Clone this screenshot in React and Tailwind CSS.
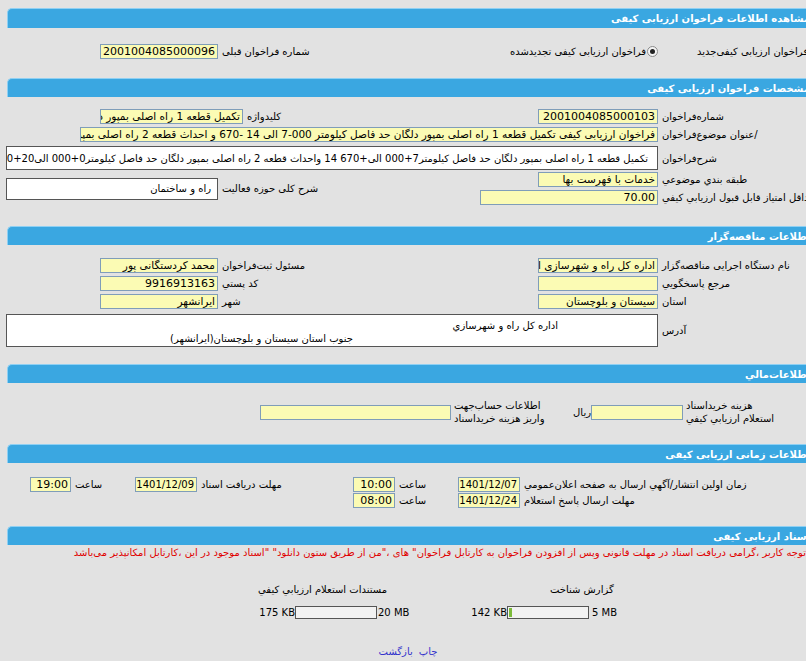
import React from 'react'

function Bar({ title, className = '' }) {
  return (
    <div
      dir="rtl"
      className={`ml-[7px] flex h-[19px] items-center rounded-tl-[5px] border-l border-t border-[#8fd0f3] bg-[#3aa7e1] pr-[12px] text-[10px] font-bold text-white ${className}`}
    >
      {title}
    </div>
  )
}

function Input({ className = '', num, date, children }) {
  const size = num ? 'text-[11px]' : date ? 'text-[10px]' : 'text-[10.5px]'
  return (
    <div
      dir="rtl"
      className={`h-[15px] shrink-0 overflow-hidden whitespace-nowrap border border-[#7f9db9] bg-[#fbfbb4] px-[2px] text-right leading-[13px] text-black ${size} ${className}`}
    >
      {children}
    </div>
  )
}

function Label({ children, className = '' }) {
  return (
    <span dir="rtl" className={`ml-[4px] whitespace-nowrap text-[10px] ${className}`}>
      {children}
    </span>
  )
}

function Radio({ checked }) {
  return (
    <span className="flex h-[11px] w-[11px] shrink-0 items-center justify-center rounded-full border border-[#8a8a8a] bg-[#f4f4f4]">
      {checked && <span className="h-[5px] w-[5px] rounded-full bg-[#222]" />}
    </span>
  )
}

function Progress({ pct }) {
  return (
    <div className="h-[13px] w-[82px] shrink-0 border border-[#555] bg-[#f2f2f2] p-[1px]">
      <div className="h-full bg-[#7cbb3a]" style={{ width: `${pct}%` }} />
    </div>
  )
}

export default function App() {
  return (
    <div className="h-[661px] w-[806px] overflow-hidden bg-[#e2e2e2] font-['DejaVu_Sans',sans-serif] text-[10px] text-black">
      <div className="w-[822px] pt-[8px]">
        <Bar title="مشاهده اطلاعات فراخوان ارزیابی کیفی" className="h-[20px] pr-[10px]" />

        {/* نوع فراخوان */}
        <div className="mt-[16px] flex h-[15px] items-center">
          <div className="flex w-[510px] items-center pl-[100px]">
            <Input num className="w-[118px]">2001004085000096</Input>
            <Label>شماره فراخوان قبلی</Label>
          </div>
          <div className="flex items-center">
            <span dir="rtl" className="w-[136px] whitespace-nowrap text-right">فراخوان ارزیابی کیفی تجدیدشده</span>
            <span className="ml-[1px]"><Radio checked /></span>
            <span dir="rtl" className="ml-[33px] w-[117px] whitespace-nowrap text-right">فراخوان ارزیابی کیفی‌جدید</span>
            <span className="ml-[2px]"><Radio /></span>
          </div>
        </div>

        <Bar title="مشخصات فراخوان ارزیابی کیفی" className="mt-[19px]" />

        <div className="mt-[12px] flex h-[15px] items-center">
          <div className="flex w-[538px] items-center pl-[100px]">
            <Input className="w-[143px]">تکمیل قطعه 1 راه اصلی بمپور دلگان</Input>
            <Label>کلیدواژه</Label>
          </div>
          <Input num className="w-[120px]">2001004085000103</Input>
          <Label>شماره‌فراخوان</Label>
        </div>

        <div className="mt-[3px] flex h-[15px] items-center pl-[80px]">
          <Input className="w-[578px]">
            فراخوان ارزیابی کیفی تکمیل قطعه 1 راه اصلی بمپور دلگان حد فاصل کیلومتر 000-7 الی 14 -670 و احداث قطعه 2 راه اصلی بمپور دلگان حد فاصل کیلومتر
          </Input>
          <Label>/عنوان موضوع‌فراخوان</Label>
        </div>

        <div className="mt-[4px] flex h-[24px] items-center pl-[6px]">
          <div
            dir="rtl"
            className="flex h-[24px] w-[652px] items-center overflow-hidden whitespace-nowrap border border-[#555] bg-white pr-[9px]"
          >
            تکمیل قطعه 1 راه اصلی بمپور دلگان حد فاصل کیلومتر7+000 الی+670 14 واحداث قطعه 2 راه اصلی بمپور دلگان حد فاصل کیلومتر0+000 الی20+000
          </div>
          <Label>شرح‌فراخوان</Label>
        </div>

        <div className="mt-[2px] flex items-center">
          <div className="flex w-[480px] items-center pl-[6px]">
            <div dir="rtl" className="flex h-[22px] w-[212px] items-center border border-[#555] bg-white pr-[6px]">
              راه و ساختمان
            </div>
            <Label>شرح کلی حوزه فعالیت</Label>
          </div>
          <div className="flex flex-col">
            <div className="flex h-[15px] items-center pl-[58px]">
              <Input className="w-[120px]">خدمات با فهرست بها</Input>
              <Label>طبقه بندي موضوعي</Label>
            </div>
            <div className="mt-[3px] flex h-[15px] items-center">
              <Input num className="w-[178px]">70.00</Input>
              <Label>حداقل امتیاز قابل قبول ارزیابي کیفي</Label>
            </div>
          </div>
        </div>

        <Bar title="اطلاعات مناقصه‌گزار" className="mt-[21px]" />

        {[
          ['محمد کردستگانی پور', 'مسئول ثبت‌فراخوان', 'اداره کل راه و شهرسازی ایرانشهر', 'نام دستگاه اجرایی مناقصه‌گزار'],
          ['9916913163', 'کد پستي', '', 'مرجع پاسخگويي'],
          ['ایرانشهر', 'شهر', 'سیستان و بلوچستان', 'استان'],
        ].map(([lv, ll, rv, rl], i) => (
          <div key={i} className={`${i === 0 ? 'mt-[13px]' : 'mt-[3px]'} flex h-[15px] items-center`}>
            <div className="flex w-[538px] items-center pl-[100px]">
              <Input num={i === 1} className="w-[118px]">{lv}</Input>
              <Label>{ll}</Label>
            </div>
            <Input className="w-[120px]">{rv}</Input>
            <Label>{rl}</Label>
          </div>
        ))}

        <div className="mt-[5px] flex items-center pl-[6px]">
          <div dir="rtl" className="h-[33px] w-[652px] border border-[#555] bg-white pt-[4px] leading-[13px]">
            <div className="pr-[99px]">اداره کل راه و شهرسازي</div>
            <div className="pr-[304px]">جنوب استان سیستان و بلوچستان(ایرانشهر)</div>
          </div>
          <Label>آدرس</Label>
        </div>

        <Bar title="اطلاعات‌مالي" className="mt-[17px]" />

        <div className="mt-[14px] flex h-[30px] items-center">
          <div className="flex w-[570px] items-center pl-[260px]">
            <Input className="w-[191px]" />
            <div dir="rtl" className="ml-[3px] whitespace-nowrap text-left leading-[13px]">
              <div>اطلاعات حساب‌جهت</div>
              <div>واریز هزینه خریداسناد</div>
            </div>
          </div>
          <span dir="rtl" className="w-[21px]">ریال</span>
          <Input className="w-[92px]" />
          <div dir="rtl" className="ml-[3px] whitespace-nowrap text-left leading-[13px]">
            <div>هزینه خریداسناد</div>
            <div>استعلام ارزیابي کیفي</div>
          </div>
        </div>

        <Bar title="اطلاعات زمانی ارزیابی کیفی" className="mt-[17px]" />

        <div className="mt-[14px] flex h-[15px] items-center">
          <div className="flex w-[135px] items-center pl-[30px]">
            <Input num className="w-[41px]">19:00</Input>
            <Label>ساعت</Label>
          </div>
          <div className="flex w-[218px] items-center">
            <Input date className="w-[62px]">1401/12/09</Input>
            <Label>مهلت دریافت اسناد</Label>
          </div>
          <div className="flex w-[105px] items-center">
            <Input num className="w-[42px]">10:00</Input>
            <Label>ساعت</Label>
          </div>
          <Input date className="w-[62px]">1401/12/07</Input>
          <Label>زمان اولین انتشار/آگهي ارسال به صفحه اعلان‌عمومي</Label>
        </div>
        <div className="mt-[1px] flex h-[15px] items-center pl-[353px]">
          <div className="flex w-[105px] items-center">
            <Input num className="w-[42px]">08:00</Input>
            <Label>ساعت</Label>
          </div>
          <Input date className="w-[62px]">1401/12/24</Input>
          <Label>مهلت ارسال پاسخ استعلام</Label>
        </div>

        <Bar title="اسناد ارزیابی کیفی" className="mt-[18px] h-[16px]" />

        <div dir="rtl" className="mt-[1px] h-[14px] whitespace-nowrap pr-[16px] leading-[14px] text-[#e00000]">
          توجه کاربر ،گرامی دریافت اسناد در مهلت قانونی وپس از افزودن فراخوان به کارتابل فراخوان" های ،"من از طریق ستون دانلود" "اسناد موجود در این ،کارتابل امکانپذیر می‌باشد
        </div>

        <div className="mt-[23px] flex pl-[258px]">
          <div className="flex w-[213px] flex-col">
            <div dir="rtl" className="h-[14px] whitespace-nowrap text-left leading-[14px]">مستندات استعلام ارزیابي کیفي</div>
            <div className="mt-[8px] flex h-[14px] items-center whitespace-nowrap">
              <span className="w-[37px] text-right">175 KB</span>
              <Progress pct={0} />
              <span className="ml-[1px]">20 MB</span>
            </div>
          </div>
          <div className="flex flex-col">
            <div dir="rtl" className="h-[14px] whitespace-nowrap pl-[79px] text-left leading-[14px]">گزارش شناخت</div>
            <div className="mt-[8px] flex h-[14px] items-center whitespace-nowrap">
              <span className="w-[36px] text-right">142 KB</span>
              <Progress pct={4} />
              <span className="ml-[3px]">5 MB</span>
            </div>
          </div>
        </div>

        <div dir="rtl" className="mt-[25px] flex w-[816px] justify-center text-[#3333cc]">
          <span className="ml-[6px]">چاپ</span>
          <span>بازگشت</span>
        </div>
      </div>
    </div>
  )
}
